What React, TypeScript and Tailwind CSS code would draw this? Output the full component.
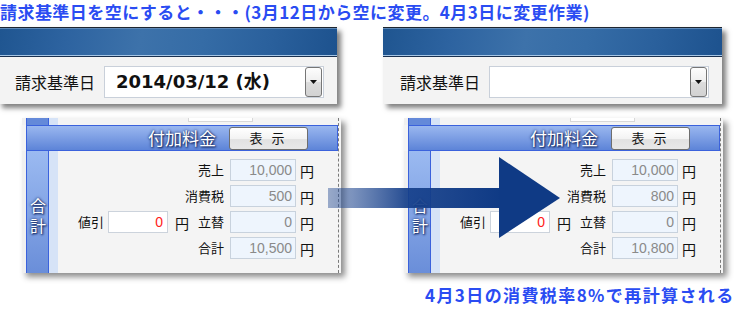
import React from "react";

const JP = "font-['Noto_Sans_CJK_JP','Noto_Sans_CJK_SC',sans-serif]";

function DropBtn() {
  return (
    <div className="w-[17px] h-[30px] rounded-[3px] border border-[#767676] bg-[linear-gradient(#fdfdfd_0%,#efefef_48%,#dcdcdc_52%,#d2d2d2_100%)] flex items-center justify-center">
      <svg width="7" height="4" viewBox="0 0 7 4">
        <path d="M0 0H7L3.5 4Z" fill="#111" />
      </svg>
    </div>
  );
}

function TopPanel({ date, cls }: { date?: string; cls: string }) {
  return (
    <div className={`w-[339px] h-[77px] bg-[#f3f3f3] shadow-[4px_4px_5px_rgba(0,0,0,0.5)] flex flex-col ${cls}`}>
      <div className="h-[30px] border-t border-b border-t-[#1e2630] border-b-[#19304f]">
        <div className="h-full border-t border-b border-t-[#5d88b8] border-b-[#a6c6e6] bg-[linear-gradient(100deg,#1f5590_0%,#2d63a0_20%,#3d72aa_42%,#356ca6_60%,#2a609c_80%,#1d528e_100%)]" />
      </div>
      <div className="flex-1 flex items-center pt-[3px]">
        <div className="w-[106px] pl-[17px] text-[16px] leading-[20px] text-[#111]">請求基準日</div>
        <div className="w-[220px] h-[32px] bg-white border border-[#c9d0da] flex items-center justify-between pl-[11px] pr-[1px]">
          <span className="font-['DejaVu_Sans','Noto_Sans_CJK_JP',sans-serif] font-bold text-[18px] leading-[22px] text-[#111]">
            {date}
          </span>
          <DropBtn />
        </div>
      </div>
    </div>
  );
}

const ro =
  "shrink-0 h-[22px] bg-[#eef5fd] border border-[#c8d2dd] text-right pr-[3px] text-[14px] leading-[20px] text-[#8a8a8a] font-['Liberation_Sans',sans-serif]";

function Yen() {
  return <span className="shrink-0 text-[14px] leading-[22px] text-[#111]">円</span>;
}

function ValRow({ label, value }: { label: string; value: string }) {
  return (
    <div className="h-[22px] flex items-center">
      <div className="w-[116px] shrink-0" />
      <div className="w-[50px] shrink-0 text-right text-[13px] leading-[22px] text-[#111] whitespace-nowrap">{label}</div>
      <div className={`ml-[6px] w-[66px] ${ro}`}>{value}</div>
      <div className="ml-[4px] shrink-0">
        <Yen />
      </div>
    </div>
  );
}

function BottomPanel({ tax, total }: { tax: string; total: string }) {
  return (
    <div className="ml-[22px] mt-[14px] w-[319px] h-[155px] bg-[#f4f4f4] shadow-[4px_4px_6px_rgba(0,0,0,0.45)] flex">
      <div className="w-[316px] flex flex-col">
        <div className="h-[7px] flex">
          <div className="w-[4px] bg-[#f0f0f0]" />
          <div className="w-[23px] bg-[#6489d9] border-x border-[#3b62dc]" />
          <div className="w-[9px] bg-[#d6e3f7]" />
          <div className="flex-1">
            <div className="ml-[130px] w-[65px] h-[4px] bg-white border-x border-b border-[#d8d8d8]" />
          </div>
        </div>
        <div className="ml-[4px] h-[26px] border border-[#3b62dc] bg-[linear-gradient(#9ab7ef,#5d84d8)] flex items-center">
          <div className="ml-[121px] text-[17px] leading-[22px] text-white [text-shadow:0_0_3px_#0a1f5a,1px_1px_2px_#0a1f5a]">
            付加料金
          </div>
          <div className="ml-[13px] w-[79px] h-[23px] rounded-[3px] border border-[#6e6e6e] bg-[linear-gradient(#ffffff_0%,#f3f3f3_50%,#e2e2e2_55%,#e8e8e8_100%)] flex items-center justify-center text-[13px] tracking-[3px] text-[#111]">
            表 示
          </div>
        </div>
        <div className="flex-1 flex">
          <div className="w-[4px] bg-[#f0f0f0]" />
          <div className="w-[23px] border-x border-[#3b62dc] bg-[linear-gradient(#9bbaf1,#6a8ed9)] flex justify-center pt-[47px] text-white text-[16px] [text-shadow:0_0_3px_#0a1f5a,1px_1px_2px_#0a1f5a]">
            <span className="[writing-mode:vertical-rl] tracking-[4px] leading-[21px]">合計</span>
          </div>
          <div className="w-[9px] bg-[#d6e3f7]" />
          <div className="flex-1 flex flex-col gap-[4px] pt-[8px]">
            <ValRow label="売上" value="10,000" />
            <ValRow label="消費税" value={tax} />
            <div className="h-[22px] flex items-center">
              <div className="w-[116px] shrink-0 flex items-center">
                <span className="w-[50px] shrink-0 pl-[20px] text-[13px] leading-[22px] text-[#111] whitespace-nowrap">値引</span>
                <div className="shrink-0 w-[60px] h-[22px] bg-white border border-[#ccd3dc] text-right pr-[4px] text-[14px] leading-[20px] text-[#ff2020] font-['Liberation_Sans',sans-serif]">
                  0
                </div>
                <span className="ml-[7px] shrink-0">
                  <Yen />
                </span>
              </div>
              <div className="w-[50px] shrink-0 text-right text-[13px] leading-[22px] text-[#111] whitespace-nowrap">立替</div>
              <div className={`ml-[6px] w-[66px] ${ro}`}>0</div>
              <div className="ml-[4px] shrink-0">
                <Yen />
              </div>
            </div>
            <ValRow label="合計" value={total} />
          </div>
        </div>
      </div>
      <div className="w-px border-l border-dashed border-[#7a7a7a]" />
      <div className="flex-1" />
    </div>
  );
}

export default function App() {
  return (
    <div className={`relative w-[750px] h-[320px] bg-white overflow-hidden ${JP}`}>
      <div className="h-[27px] text-[17px] leading-[23px] font-bold tracking-[0.45px] text-[#2a4cf2] whitespace-nowrap">
        請求基準日を空にすると・・・(3月12日から空に変更。4月3日に変更作業)
      </div>
      <div className="flex">
        <div className="w-[382px] shrink-0">
          <TopPanel date="2014/03/12 (水)" cls="ml-[-2px]" />
          <BottomPanel tax="500" total="10,500" />
        </div>
        <div className="flex-1">
          <TopPanel cls="ml-[1px]" />
          <BottomPanel tax="800" total="10,800" />
        </div>
      </div>
      <div className="mt-[11px] pl-[425px] text-[17px] leading-[22px] font-bold tracking-[1.4px] text-[#2a4cf2] whitespace-nowrap">
        4月3日の消費税率8%で再計算される
      </div>
      <svg className="absolute left-[328px] top-[157px]" width="233" height="82" viewBox="0 0 233 82">
        <defs>
          <linearGradient id="bar" x1="0" y1="0" x2="1" y2="0">
            <stop offset="0" stopColor="#2a4f95" stopOpacity="0.45" />
            <stop offset="0.45" stopColor="#153f8a" stopOpacity="0.92" />
            <stop offset="1" stopColor="#0f3a85" stopOpacity="1" />
          </linearGradient>
        </defs>
        <rect x="0" y="31" width="173" height="20" fill="url(#bar)" />
        <path d="M171 0L171 81L232 41Z" fill="#0f3a85" />
      </svg>
    </div>
  );
}
